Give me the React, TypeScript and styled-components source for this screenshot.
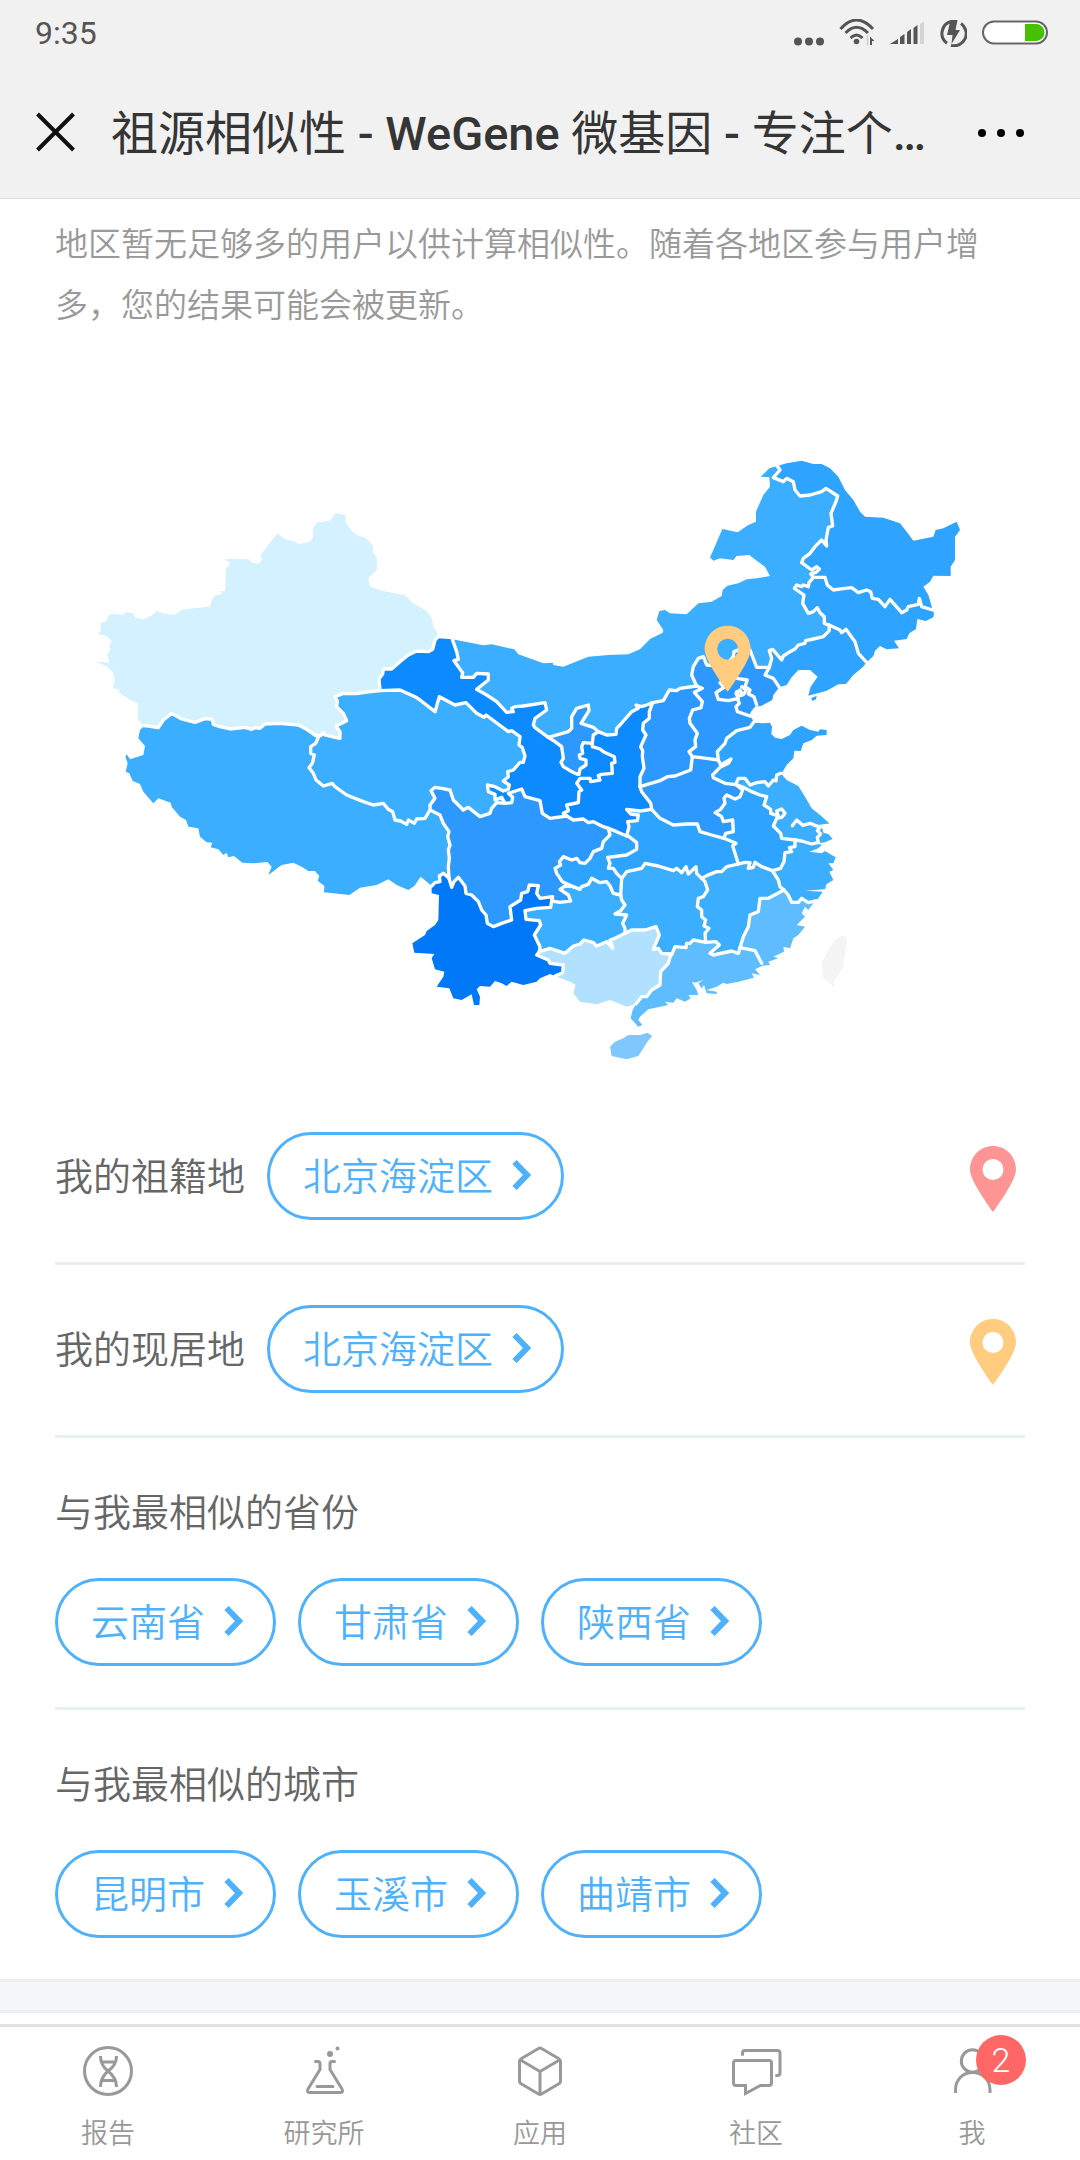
import React from 'react';
import styled, { createGlobalStyle } from 'styled-components';

/* ---------- map data ---------- */

type Point = [number, number];

// Every line is surveyed on one of four sheets; each sheet has its own origin on the map.
const sheets: Record<string, Point> = {
  west: [0, 150],
  centre: [900, 480],
  north: [1680, 0],
  east: [1440, 720],
};

const arc = (sheet: string, points: string): Point[] =>
  points.trim().split(/\s+/).map((pair) => {
    const [x, y] = pair.split(',').map(Number);
    return [x + sheets[sheet][0], y + sheets[sheet][1]];
  });

const coasts: Record<string, Point[]> = {
  xj: arc('west', '190,707 173,685 175,640 155,632 118,608 118,598 98,595 104,570 98,545 82,530 50,515 88,518 82,495 90,480 88,465 96,455 80,438 55,433 63,418 60,400 80,393 85,377 95,372 130,374 138,367 160,368 163,382 190,388 210,380 232,363 250,370 282,375 305,360 340,355 390,350 400,320 430,308 418,303 436,303 438,240 450,218 432,206 505,208 515,217 537,222 548,205 540,198 592,130 612,146 645,155 655,162 690,155 698,145 700,112 712,97 750,93 765,70 795,74 797,98 815,122 835,138 855,142 878,165 880,190 891,205 890,240 865,265 870,290 905,302 975,316 1000,340 1040,363 1055,385 1060,410 1077,437'),
  xz: arc('west', '190,710 180,720 175,745 195,768 190,795 150,808 140,793 136,800 143,820 137,845 148,850 158,873 180,882 190,905 220,940 235,925 272,938 275,950 300,980 318,990 325,1010 355,1015 360,1040 380,1057 397,1058 392,1072 415,1078 430,1095 440,1088 445,1102 462,1098 487,1118 520,1120 562,1116 575,1130 565,1155 605,1125 640,1118 665,1130 685,1143 705,1143 718,1158 713,1172 733,1188 732,1207 808,1215 840,1193 890,1185 925,1168 950,1185 985,1200 1003,1188 1022,1160 1040,1175 1055,1188'),
  gs: arc('centre', '217,118 175,115'),
  nm: arc('north', '412,78 388,85 362,110 388,112 390,140 370,165 348,215 348,245 325,255 293,277 247,267 220,330 210,352 220,362 240,355 280,360 290,348 328,345 350,362 375,380 390,408 350,415 320,418 295,430 262,437 248,450 245,468 215,485 175,490 140,523 90,520 75,510 58,513 50,540 70,570 68,578 30,597 0,628 -35,643 -95,645 -155,650 -230,680 -260,675 -262,668 -290,670 -365,643 -377,628 -445,613 -470,616 -563,598'),
  hl: arc('north', '412,78 440,70 485,62 520,72 545,72 570,85 595,110 615,150 640,180 660,215 675,230 730,233 780,250 800,275 820,302 880,290 887,270 910,265 950,245 960,270 945,290 945,360 932,380 932,408 880,407 870,425 850,440 865,465 878,510'),
  jl: arc('north', '878,510 882,520 880,532 857,543 832,537 828,567 808,580 800,597 762,602 777,625 740,628 720,618 705,632 700,648 680,667'),
  ln: arc('north', '680,667 668,682 640,705 618,732 595,733 560,752 505,767 512,740 533,710 510,690 475,690 455,712 440,735 418,742'),
  he: arc('north', '418,742 400,765 397,780 365,797 345,800 335,812 328,825 342,845'),
  sd: arc('east', '582,128 610,130 630,128 636,140 634,162 645,173 665,177 690,165 700,150 725,137 750,150 775,155 780,148 800,150 800,165 770,167 755,180 730,190 722,213 703,212 700,235 680,255 665,280'),
  js: arc('east', '662,280 680,300 715,318 735,350 755,385 780,405 808,430 785,438 790,458 805,462 818,477 795,487 772,490'),
  zj: arc('east', '772,490 785,495 775,505 748,515 785,520 795,513 815,525 827,532 820,550 805,550 820,570 808,575 820,600 800,612 795,628 735,632 788,635 770,662'),
  fj: arc('east', '770,662 760,670 745,690 735,680 725,700 735,710 710,735 735,740 715,765 700,775 690,805 670,800 672,815 640,830 655,835 625,845 630,855 608,857'),
  gd: arc('east', '608,857 585,868 600,885 575,880 582,893 535,905 500,912 490,908 470,920 440,930 470,935 470,942 440,940 432,915 425,925 415,910 430,900 405,908 395,905 410,930 415,945 385,945 392,955 375,965 350,955 340,968 315,965 325,975 265,988 240,1010 235,1020 247,1035 235,1040 212,1015 218,990 228,972'),
  gx: arc('centre', '525,1128 570,1145 587,1155 580,1180 600,1205 650,1213 690,1200 740,1220 768,1212'),
  yn: arc('centre', '155,858 155,880 177,885 175,960 165,975 140,993 135,1005 97,1030 103,1058 163,1062 155,1075 165,1108 193,1115 190,1130 170,1160 208,1165 220,1195 245,1200 275,1183 282,1215 298,1215 300,1190 290,1168 300,1158 330,1160 345,1143 365,1150 380,1158 395,1145 430,1155 470,1145 480,1135 510,1122 525,1128'),
};

const borders: Record<string, Point[]> = {
  xjgs: arc('west', '1077,437 1065,450 1058,478 1045,485 1010,483 985,495 960,515 935,537 910,537 908,552 897,567 900,602'),
  xjqh: arc('west', '900,602 860,606 830,611 790,610 765,620 772,634 770,650 790,670 800,692 785,700 768,708 780,725 780,745 765,742 735,735 730,728 722,737 705,735'),
  xjxz: arc('west', '705,735 680,718 655,705 600,700 555,702 540,715 525,713 515,718 495,712 450,717 420,710 400,703 397,688 375,686 345,697 305,687 275,670 250,690 235,713 205,708 190,707'),
  xzyn: arc('centre', '155,858 165,848 180,845 178,828 190,820 207,835'),
  xzsc: arc('centre', '207,835 205,800 208,775 205,750 210,735 203,710 207,695 190,670 180,645 150,630'),
  xzqh: arc('west', '1050,960 1035,985 1010,987 1003,1000 985,990 980,1003 962,993 945,990 938,965 925,958 910,940 880,945 850,935 800,915 765,890 757,880 730,888 708,870 700,850 687,833 697,820 703,795 692,790 692,770 707,760 715,742 705,735'),
  qhgs: arc('centre', '0,272 60,270 105,290 120,300 165,335 178,290 225,315 258,308 290,340 312,352 318,345 385,395 395,392 420,410 417,435 427,443 435,467 430,487 420,487 400,510 383,515 385,530 370,543 388,555 385,568 370,573 345,560 322,555 325,575 345,583 345,600 365,592 375,610'),
  qhsc: arc('centre', '375,610 350,608 335,625 330,640 300,650 265,622 250,630 220,600 210,570 185,565 165,562 153,572 165,595 150,615 150,630'),
  gssc: arc('centre', '375,610 395,608 398,592 385,580 425,567 435,590 480,602 487,640 510,655 560,648'),
  gssn: arc('centre', '560,648 550,640 565,632 560,615 595,608 597,575 605,570 590,550 600,535 630,535 632,545 660,540 655,527 665,523 697,520 695,490 705,487 703,470 670,455 660,447 637,440 637,430'),
  gsnx: arc('centre', '637,430 610,428 605,440 608,460 598,465 600,475 618,480 618,495 600,507 597,523 590,522 570,512 550,500 543,487 550,475 545,440 525,425 505,412'),
  gsnm: arc('centre', '505,412 465,383 460,375 465,355 500,330 495,308 430,318 405,320 395,325 400,335 380,337 350,305 320,285 290,268 325,240 325,222 290,220 280,232 245,232 248,218 222,182 235,178 230,155 217,118'),
  nxnm: arc('centre', '505,412 565,395 575,385 575,350 590,325 625,315 627,332 603,370 640,382 655,395'),
  nxsn: arc('centre', '655,395 640,405 637,430'),
  nmsn: arc('centre', '655,395 680,405 708,403 710,385 720,375 755,335 775,325 768,315 785,320 800,315 818,308'),
  nmsx: arc('centre', '818,308 850,302 868,270 890,272 900,265 950,258'),
  nmhe: arc('north', '170,738 155,705 160,680 175,655 190,650 200,675 240,678 262,672 280,650 282,635 300,628 330,630 350,682 388,682'),
  nmln: arc('north', '388,682 395,655 388,632 398,628 425,660 430,648 450,635 465,627 475,615 495,610 497,602 520,597 550,590 568,572 567,555'),
  nmjl: arc('north', '567,555 553,550 553,530 540,518 532,503 520,515 505,520 488,490 492,465 463,445 470,435 485,440 490,435 505,440 507,428 520,412'),
  nmhl: arc('north', '520,412 512,402 528,397 538,387 530,380 515,390 485,368 490,355 510,340 525,320 545,300 560,318 558,300 565,262 578,258 573,220 588,185 593,168 558,145 545,155 510,165 480,168 465,150 460,125 440,115 430,125 400,113 420,90 412,78'),
  hljl: arc('north', '520,412 555,412 562,435 580,450 615,445 635,443 655,458 680,450 692,455 697,475 715,478 735,500 750,478 785,518 800,510 805,500 835,493 838,475 845,500 878,510'),
  jlln: arc('north', '567,555 600,570 605,578 618,568 645,605 655,640 680,667'),
  lnhe: arc('north', '388,682 375,705 400,715 418,742'),
  hesx: arc('east', '410,18 427,25 403,37 427,65 423,83 398,90 388,115 390,130 412,160 405,180 407,200 387,215 397,230'),
  heha: arc('east', '397,230 440,235 475,240'),
  hesd: arc('east', '475,240 472,215 495,190 500,175 530,152 570,142 582,125'),
  sdjs: arc('east', '662,280 650,285 648,303 640,300 625,318 615,305 590,308 570,315 555,295 535,295 528,312'),
  sdha: arc('east', '475,240 482,255 513,237 505,250 480,262 458,285 460,293 495,310 528,314'),
  haah: arc('east', '528,314 548,330 540,350 525,357 500,345 492,355 495,370 482,388 465,398 485,410 490,425 518,420 520,455 497,460 492,475'),
  jsah: arc('east', '528,314 550,322 575,335 600,345 620,350 612,375 632,388 632,400 655,408 650,393 665,387 675,400 665,412 650,415 640,438 662,460 665,475 705,480'),
  jszj: arc('east', '705,480 725,483 755,492 772,488'),
  ahzj: arc('east', '705,480 705,500 688,503 695,515 675,518 672,545 662,565 637,572'),
  ahjx: arc('east', '637,572 605,560 585,547 580,562 565,565 570,548 555,547 535,552'),
  ahhb: arc('east', '492,475 528,490 518,497 525,520 535,552'),
  hahb: arc('east', '492,475 455,465 420,455 412,432 380,432 340,435 300,415 275,388'),
  hasn: arc('east', '275,388 272,370 245,335 240,320'),
  hasx: arc('east', '240,320 300,302 322,290 345,288 392,270 397,230'),
  sxsn: arc('east', '240,320 240,290 252,265 247,230 248,212 242,200 258,165 248,150 250,130 268,115 268,95 278,68'),
  snhb: arc('east', '275,388 240,393 200,388 212,402 235,405 232,422 203,425 207,440 200,468'),
  sncq: arc('east', '200,468 170,455 145,445'),
  snsc: arc('centre', '685,685 670,680 640,665 625,668 610,657 580,660 560,648'),
  sccq: arc('centre', '685,685 690,705 670,725 665,745 640,755 630,775 615,790 600,788 590,775 575,780 550,770 538,785 542,795 525,805 530,820 547,845 580,860'),
  scgz: arc('centre', '580,860 555,858 540,868 565,885 572,903 540,907 515,903'),
  scyn: arc('centre', '515,903 518,890 480,895 470,880 475,857 448,855 443,875 425,880 422,900 390,920 395,960 365,970 340,980 322,970 318,945 305,930 295,905 275,885 258,880 255,858 235,832 222,845 215,862 207,835'),
  yngz: arc('centre', '515,903 512,922 470,925 435,932 438,958 478,962 482,975 463,1005 480,1040 478,1055'),
  yngx: arc('centre', '478,1055 470,1065 505,1080 510,1090 550,1095 548,1118 525,1128'),
  gxgd: arc('centre', '768,1212 785,1190 800,1190 815,1170 840,1155 842,1115 865,1090 872,1065'),
  gxhn: arc('centre', '872,1062 845,1060 835,1045 820,1048 838,1005 828,980 795,990 755,990 735,1000'),
  gxgz: arc('centre', '735,1000 705,1015 690,1020 698,1045 680,1025 650,1038 640,1028 612,1020 600,1032 580,1038 555,1060 510,1045 478,1055'),
  gzhn: arc('centre', '735,1000 735,985 728,970 740,945 705,942 722,932 735,915 725,900 722,885'),
  gzcq: arc('centre', '722,885 700,880 690,858 680,845 660,848 635,835 625,853 605,860 600,868 580,860'),
  cqhn: arc('centre', '722,885 725,835'),
  cqhb: arc('centre', '725,835 710,820 700,805 685,805 690,790 683,772 740,765 770,748 770,728 745,708'),
  hnhb: arc('centre', '725,835 740,815 785,805 795,790 835,798 880,812 890,805 905,818 918,800 925,822 948,800 950,820 965,835'),
  hbjx: arc('east', '425,595 440,587 470,575 485,575 500,560 535,552'),
  hnjx: arc('east', '425,595 435,605 443,630 430,650 415,655 412,680 425,690 425,710 437,720 432,738 447,745 435,760 437,787'),
  hngd: arc('east', '437,787 400,780 390,790 380,790 378,803 345,800 335,825 330,822'),
  jxgd: arc('east', '437,787 468,785 478,795 450,820 460,825 515,813 535,820 540,803'),
  jxfj: arc('east', '540,803 550,770 565,740 570,705 595,695 600,655 625,655 672,630'),
  jxzj: arc('east', '672,630 660,620 655,600 637,572'),
  fjzj: arc('east', '672,630 685,645 695,667 715,667 725,655 745,668 770,662'),
  fjgd: arc('east', '540,803 585,812 605,850'),
};

const innerLines: Point[][] = [
  arc('north', '350,795 342,770 325,762 330,750 315,740 322,720 295,716 285,712'),
  arc('north', '240,728 252,742 228,758 235,778 265,782 295,775 288,760 300,750 308,765 297,768 290,755'),
  arc('north', '305,740 318,750 312,762'),
  arc('north', '292,775 298,790 288,800 292,815 330,828'),
  arc('east', '782,440 772,452 782,462 772,472 775,488'),
  arc('east', '697,437 710,420 728,436 750,430 775,440 800,436'),
];

const shades = {
  ice: '#d4f1ff',
  mist: '#b2e1ff',
  pale: '#80c7ff',
  light: '#5ebcff',
  sky: '#3caeff',
  azure: '#2ea3ff',
  blue: '#2d99ff',
  strong: '#0e8aff',
  deep: '#0078f8',
};

// A leading "-" walks the line backwards.
const provinces: { name: string; fill: string; ring: string }[] = [
  { name: '新疆', fill: shades.ice, ring: 'xj xjgs xjqh xjxz' },
  { name: '西藏', fill: shades.sky, ring: 'xz xzyn xzsc xzqh xjxz' },
  { name: '青海', fill: shades.sky, ring: 'qhgs qhsc xzqh -xjqh' },
  { name: '甘肃', fill: shades.strong, ring: 'xjgs qhgs gssc gssn gsnx gsnm gs' },
  { name: '宁夏', fill: shades.blue, ring: 'nxnm nxsn gsnx' },
  { name: '内蒙古', fill: shades.sky, ring: 'nm -gsnm nxnm nmsn nmsx nmhe nmln nmjl nmhl' },
  { name: '黑龙江', fill: shades.azure, ring: 'hl -hljl nmhl' },
  { name: '吉林', fill: shades.azure, ring: 'jl -jlln nmjl hljl' },
  { name: '辽宁', fill: shades.azure, ring: 'ln -lnhe nmln jlln' },
  { name: '河北', fill: shades.blue, ring: 'nmhe lnhe he -hesd -heha -hesx' },
  { name: '山西', fill: shades.blue, ring: 'nmsx hesx -hasx sxsn' },
  { name: '陕西', fill: shades.strong, ring: 'nmsn -sxsn -hasn snhb sncq snsc gssn -nxsn' },
  { name: '河南', fill: shades.blue, ring: 'heha sdha haah hahb hasn hasx' },
  { name: '山东', fill: shades.azure, ring: 'sd sdjs -sdha hesd' },
  { name: '江苏', fill: shades.sky, ring: 'js -jszj -jsah -sdjs' },
  { name: '安徽', fill: shades.azure, ring: 'jsah ahzj ahjx -ahhb -haah' },
  { name: '湖北', fill: shades.azure, ring: 'hahb snhb -cqhb hnhb hbjx -ahhb' },
  { name: '重庆', fill: shades.azure, ring: 'sncq sccq -gzcq cqhn cqhb' },
  { name: '四川', fill: shades.blue, ring: 'xzsc -qhsc gssc -snsc sccq scgz scyn' },
  { name: '云南', fill: shades.deep, ring: 'yn -yngx -yngz scyn -xzyn' },
  { name: '贵州', fill: shades.sky, ring: 'scgz yngz -gxgz gzhn gzcq' },
  { name: '广西', fill: shades.mist, ring: 'gx gxgd gxhn gxgz yngx' },
  { name: '广东', fill: shades.light, ring: 'gd gxgd -hngd jxgd fjgd' },
  { name: '湖南', fill: shades.sky, ring: 'hnhb hnjx hngd gxhn gzhn cqhn' },
  { name: '江西', fill: shades.sky, ring: 'hbjx -ahjx -jxzj -jxfj -jxgd -hnjx' },
  { name: '福建', fill: shades.light, ring: 'fj -fjgd jxfj fjzj' },
  { name: '浙江', fill: shades.sky, ring: 'zj -fjzj jxzj -ahzj jszj' },
];

const islands = [
  { name: '海南', fill: shades.pale, points: arc('east', '150,1100 165,1085 190,1075 205,1065 240,1065 262,1058 277,1068 262,1085 250,1105 235,1128 200,1138 155,1128') },
  { name: '台湾', fill: '#f4f4f4', points: arc('east', '860,772 858,800 850,860 822,905 822,925 812,912 790,895 785,850 810,800 825,780 845,768') },
  { name: '长山群岛', fill: shades.azure, points: arc('north', '513,775 530,767 528,778 518,783') },
];

const toPath = (points: Point[]) => 'M' + points.map((p) => p.join(' ')).join('L');

const distance = (a: Point, b: Point) => Math.hypot(a[0] - b[0], a[1] - b[1]);

// Joins the lines of a ring end to end, turning each so that it goes on from the last one.
const ringPath = (ring: string) => {
  const lines = ring.split(' ').map((key) => {
    const id = key.replace('-', '');
    const line = coasts[id] ?? borders[id];
    return key.startsWith('-') ? [...line].reverse() : line;
  });
  const first = lines[0];
  const second = lines[1];
  const near = (p: Point) => Math.min(distance(p, second[0]), distance(p, second[second.length - 1]));
  let joined = near(first[0]) < near(first[first.length - 1]) ? [...first].reverse() : [...first];
  for (const line of lines.slice(1)) {
    const end = joined[joined.length - 1];
    const flip = distance(end, line[line.length - 1]) < distance(end, line[0]);
    joined = joined.concat(flip ? [...line].reverse() : line);
  }
  return toPath(joined) + 'Z';
};

/* ---------- styles ---------- */

const cjk = '"Noto Sans CJK SC", sans-serif';

const GlobalStyle = createGlobalStyle`
  *, *::before, *::after { box-sizing: border-box; }
  body { margin: 0; background: #fff; font-family: Roboto, ${cjk}; font-weight: 350; }
  h1, h2, p { margin: 0; }
  button { font: inherit; background: none; border: 0; padding: 0; cursor: pointer; }
  svg { display: block; flex: none; }
`;

const Page = styled.div`
  display: flex;
  flex-direction: column;
  min-height: 100vh;
`;

const Header = styled.header`
  background: #f1f1f1;
  border-bottom: 1px solid #dedede;
`;

const StatusBar = styled.div`
  display: flex;
  align-items: center;
  gap: 15px;
  height: 66px;
  padding: 0 32px 0 35px;
  color: #555;
`;

const Clock = styled.time`
  margin-right: auto;
  font-size: 32px;
  font-weight: 400;
  line-height: 66px;
`;

const TitleBar = styled.div`
  display: flex;
  align-items: center;
  height: 132px;
  padding: 0 54px 0 36px;
`;

const Title = styled.h1`
  flex: 1;
  min-width: 0;
  margin-left: 36px;
  padding-top: 3px;
  overflow: hidden;
  white-space: nowrap;
  color: #353535;
  font-size: 47px;
  font-weight: 400;
  line-height: 66px;

  b { font-weight: 500; }
`;

const IconButton = styled.button`
  color: #111;
`;

const Main = styled.main`
  flex: 1;
  padding-bottom: 11px;
`;

const Content = styled.div`
  padding: 0 55px;
`;

const Note = styled.p`
  padding-top: 15px;
  color: #999;
  font-size: 33px;
  line-height: 61px;
`;

const MapFigure = styled.figure`
  margin: 104px 0 12px;

  svg { width: 100%; height: auto; }
`;

const PlaceRow = styled.section`
  display: flex;
  align-items: center;
  padding: 40px 9px 42px 0;
  border-bottom: 3px solid #e9eef2;
`;

const PlaceLabel = styled.span`
  margin-right: 22px;
  padding-top: 2px;
  color: #666;
  font-size: 38px;
  line-height: 56px;
`;

const PinSlot = styled.span`
  margin-left: auto;
  padding-top: 6px;
`;

const SimilarSection = styled.section<{ $last?: boolean }>`
  padding: 47px 0 41px;
  border-bottom: ${(p) => (p.$last ? '0' : '3px solid #e9eef2')};
`;

const SimilarTitle = styled.h2`
  margin-bottom: 37px;
  color: #666;
  font-size: 38px;
  font-weight: inherit;
  line-height: 56px;
`;

const PillList = styled.div`
  display: flex;
  flex-wrap: wrap;
  gap: 22px;
`;

const PillButton = styled.button`
  display: flex;
  align-items: center;
  gap: 19px;
  height: 88px;
  padding: 2px 30px 0 33px;
  border: 3px solid #4fb1fc;
  border-radius: 44px;
  color: #4fb1fc;
  font-size: 38px;
  line-height: 56px;
`;

const Band = styled.div`
  height: 34px;
  border: solid #ebeff2;
  border-width: 3px 0;
  background: #f3f7fa;
`;

const TabBar = styled.nav`
  position: sticky;
  bottom: 0;
  display: grid;
  grid-template-columns: repeat(5, 1fr);
  background: #fff;
  border-top: 3px solid #dfe3e6;
`;

const Tab = styled.button`
  display: flex;
  flex-direction: column;
  align-items: center;
  gap: 20px;
  padding: 19px 0 8px;
  color: #999;
  font-size: 27px;
  line-height: 36px;
`;

const TabIcon = styled.span`
  position: relative;
  width: 50px;
  height: 50px;

  svg { overflow: visible; }
`;

const Badge = styled.span`
  position: absolute;
  top: -11px;
  left: 29px;
  width: 50px;
  height: 50px;
  border-radius: 50%;
  background: #ff6767;
  color: #fff;
  font-size: 34px;
  font-weight: 300;
  line-height: 50px;
  text-align: center;
`;

/* ---------- icons ---------- */

const pinShape = 'M23 0C10.3 0 0 10.3 0 23.5C0 32 11 49.5 23 66C35 49.5 46 32 46 23.5C46 10.3 35.7 0 23 0ZM23 13a10.5 10.5 0 1 1 0 21a10.5 10.5 0 1 1 0-21Z';

const Pin = ({ color }: { color: string }) => (
  <svg width="46" height="66" viewBox="0 0 46 66" aria-hidden="true">
    <path d={pinShape} fill={color} fillRule="evenodd" />
  </svg>
);

const Chevron = () => (
  <svg width="19" height="36" viewBox="0 0 19 36" aria-hidden="true">
    <path d="M2.5 3L15 16L2.5 29" fill="none" stroke="currentColor" strokeWidth="6" />
  </svg>
);

const StatusIcons = () => (
  <>
    <svg width="30" height="28" viewBox="0 0 30 28" fill="currentColor" aria-hidden="true">
      <circle cx="4" cy="22.5" r="4" />
      <circle cx="15" cy="22.5" r="4" />
      <circle cx="26" cy="22.5" r="4" />
    </svg>
    <svg width="36" height="28" viewBox="0 0 36 28" fill="none" stroke="currentColor" strokeWidth="3" aria-hidden="true">
      <path d="M1.500 10Q17.500-8 34 10M6.500 14Q17.500 2.500 29 14M11.500 19Q17.500 13 23.500 19" />
      <circle cx="17.500" cy="22.500" r="2.800" fill="currentColor" stroke="none" />
      <path d="M28.500 16.500V26" stroke="#ccc" strokeWidth="1.500" />
      <path d="M31 26V17.500L35.500 22H33V26Z" fill="currentColor" stroke="none" />
    </svg>
    <svg width="34" height="28" viewBox="0 0 34 28" fill="currentColor" aria-hidden="true">
      <path d="M0 25L8 20V25ZM10 18L14.500 15V25H10ZM17 13L21 10V25H17ZM23.500 9L27.500 6V25H23.500Z" />
      <path d="M30 5L34 2.500V25H30Z" fill="#d4d4d4" />
    </svg>
    <svg width="28" height="28" viewBox="0 0 28 28" aria-hidden="true">
      <path d="M12 2.500A12.300 12.300 0 0 0 8 24.300M22 4.500A12.300 12.300 0 0 1 12 26.500" fill="none" stroke="currentColor" strokeWidth="3" />
      <path d="M11.500 1H18.500L16.500 11H21L12.500 25L13.500 16H8Z" fill="currentColor" />
    </svg>
    <svg width="66" height="28" viewBox="1 0 66 28" aria-hidden="true">
      <rect x="2" y="2.500" width="64" height="22" rx="11" fill="#fff" stroke="#666" strokeWidth="2" />
      <path d="M44 5H55A8.500 8.500 0 0 1 55 22H44Z" fill="#46c100" />
    </svg>
  </>
);

const iconPaths: Record<string, React.ReactNode> = {
  report: (
    <>
      <circle cx="25" cy="25" r="23.500" />
      <path d="M17.500 10C17.500 17 21 22 25 25C29.500 28.500 33.500 34 33.500 41M33.500 10C33.500 17 29.500 22 25 25C21 28.500 17.500 34 17.500 41M18.500 16H32M18.500 34.500H32" strokeLinecap="butt" />
    </>
  ),
  lab: (
    <>
      <path d="M16.500 15.500h2.500q2 0 2 2v6L9 43q-1.500 3.500 1.500 3.500h31q3 0 1.500-3.500L31 23.500v-6q0-2 2-2h2.500M18 40.500H34" />
      <circle cx="31" cy="8" r="3" fill="currentColor" stroke="none" />
      <circle cx="38.500" cy="2.500" r="2" fill="currentColor" stroke="none" />
    </>
  ),
  apps: <path d="M23.500 2.500q1.500-1 3 0L43.500 12.500q2 1.200 2 3V35q0 2-2 3L26.500 48q-1.500 1-3 0L6.500 38q-2-1-2-3V15.500q0-2 2-3ZM5.500 14L25 25.500L44.500 14M25 25.500V48" />,
  community: (
    <>
      <path d="M5 14.500H38q2.500 0 2.500 2.500V37q0 2.500-2.500 2.500H29.500L14.500 47.500V39.500H5q-2.500 0-2.500-2.500V17q0-2.500 2.500-2.500Z" strokeLinecap="butt" strokeLinejoin="miter" />
      <path d="M11.500 8.500V7q0-2.500 2.500-2.500H46.500q2.500 0 2.500 2.500V27q0 2.500-2.500 2.500H45.500" />
    </>
  ),
  me: (
    <>
      <circle cx="25.500" cy="15" r="11.200" />
      <path d="M8.500 47V44C8.500 34 15.500 26.500 25.500 26.500S43 34 43 44V47" strokeLinecap="butt" />
    </>
  ),
};

const tabs = [
  { icon: 'report', label: '报告' },
  { icon: 'lab', label: '研究所' },
  { icon: 'apps', label: '应用' },
  { icon: 'community', label: '社区' },
  { icon: 'me', label: '我', badge: 2 },
];

/* ---------- parts ---------- */

const Pill = ({ children }: { children: React.ReactNode }) => (
  <PillButton type="button">
    {children}
    <Chevron />
  </PillButton>
);

const ChinaMap = () => (
  <MapFigure>
    <svg viewBox="-75 0 2910 1920" role="img" aria-label="祖源相似性">
      {provinces.map((p) => (
        <path key={p.name} d={ringPath(p.ring)} fill={p.fill} />
      ))}
      {islands.map((p) => (
        <path key={p.name} d={toPath(p.points) + 'Z'} fill={p.fill} />
      ))}
      <g fill="none" stroke="#fff" strokeWidth="10" strokeLinejoin="round" strokeLinecap="round">
        {Object.keys(borders).map((key) => (
          <path key={key} d={toPath(borders[key])} />
        ))}
        {innerLines.map((line, i) => (
          <path key={i} d={toPath(line)} />
        ))}
      </g>
      <path d={pinShape} fill="#ffcc80" fillRule="evenodd" transform="translate(1874 557) scale(3)" />
    </svg>
  </MapFigure>
);

const Similar = ({ title, places, last }: { title: string; places: string[]; last?: boolean }) => (
  <SimilarSection $last={last}>
    <SimilarTitle>{title}</SimilarTitle>
    <PillList>
      {places.map((place) => (
        <Pill key={place}>{place}</Pill>
      ))}
    </PillList>
  </SimilarSection>
);

export default function App() {
  return (
    <Page lang="zh-CN">
      <GlobalStyle />
      <Header>
        <StatusBar>
          <Clock>9:35</Clock>
          <StatusIcons />
        </StatusBar>
        <TitleBar>
          <IconButton type="button" aria-label="关闭">
            <svg width="39" height="40" viewBox="0 0 39 40" fill="none" stroke="currentColor" strokeWidth="4">
              <path d="M1.500 2L37.500 38M37.500 2L1.500 38" />
            </svg>
          </IconButton>
          <Title>
            祖源相似性 <b>- WeGene</b> 微基因 <b>-</b> 专注个<b>…</b>
          </Title>
          <IconButton type="button" aria-label="更多">
            <svg width="50" height="40" viewBox="0 0 50 40" fill="#000">
              <circle cx="6" cy="21" r="4" />
              <circle cx="25" cy="21" r="4" />
              <circle cx="44" cy="21" r="4" />
            </svg>
          </IconButton>
        </TitleBar>
      </Header>
      <Main>
        <Content>
          <Note>
            地区暂无足够多的用户以供计算相似性。随着各地区参与用户增
            <br />
            多，您的结果可能会被更新。
          </Note>
          <ChinaMap />
          <PlaceRow>
            <PlaceLabel>我的祖籍地</PlaceLabel>
            <Pill>北京海淀区</Pill>
            <PinSlot>
              <Pin color="#ff9494" />
            </PinSlot>
          </PlaceRow>
          <PlaceRow>
            <PlaceLabel>我的现居地</PlaceLabel>
            <Pill>北京海淀区</Pill>
            <PinSlot>
              <Pin color="#ffcc80" />
            </PinSlot>
          </PlaceRow>
          <Similar title="与我最相似的省份" places={['云南省', '甘肃省', '陕西省']} />
          <Similar title="与我最相似的城市" places={['昆明市', '玉溪市', '曲靖市']} last />
        </Content>
        <Band />
      </Main>
      <TabBar>
        {tabs.map((tab) => (
          <Tab key={tab.label} type="button">
            <TabIcon>
              <svg width="50" height="50" viewBox="0 0 50 50" fill="none" stroke="currentColor" strokeWidth="3" strokeLinecap="round" strokeLinejoin="round" aria-hidden="true">
                {iconPaths[tab.icon]}
              </svg>
              {tab.badge && <Badge>{tab.badge}</Badge>}
            </TabIcon>
            {tab.label}
          </Tab>
        ))}
      </TabBar>
    </Page>
  );
}
